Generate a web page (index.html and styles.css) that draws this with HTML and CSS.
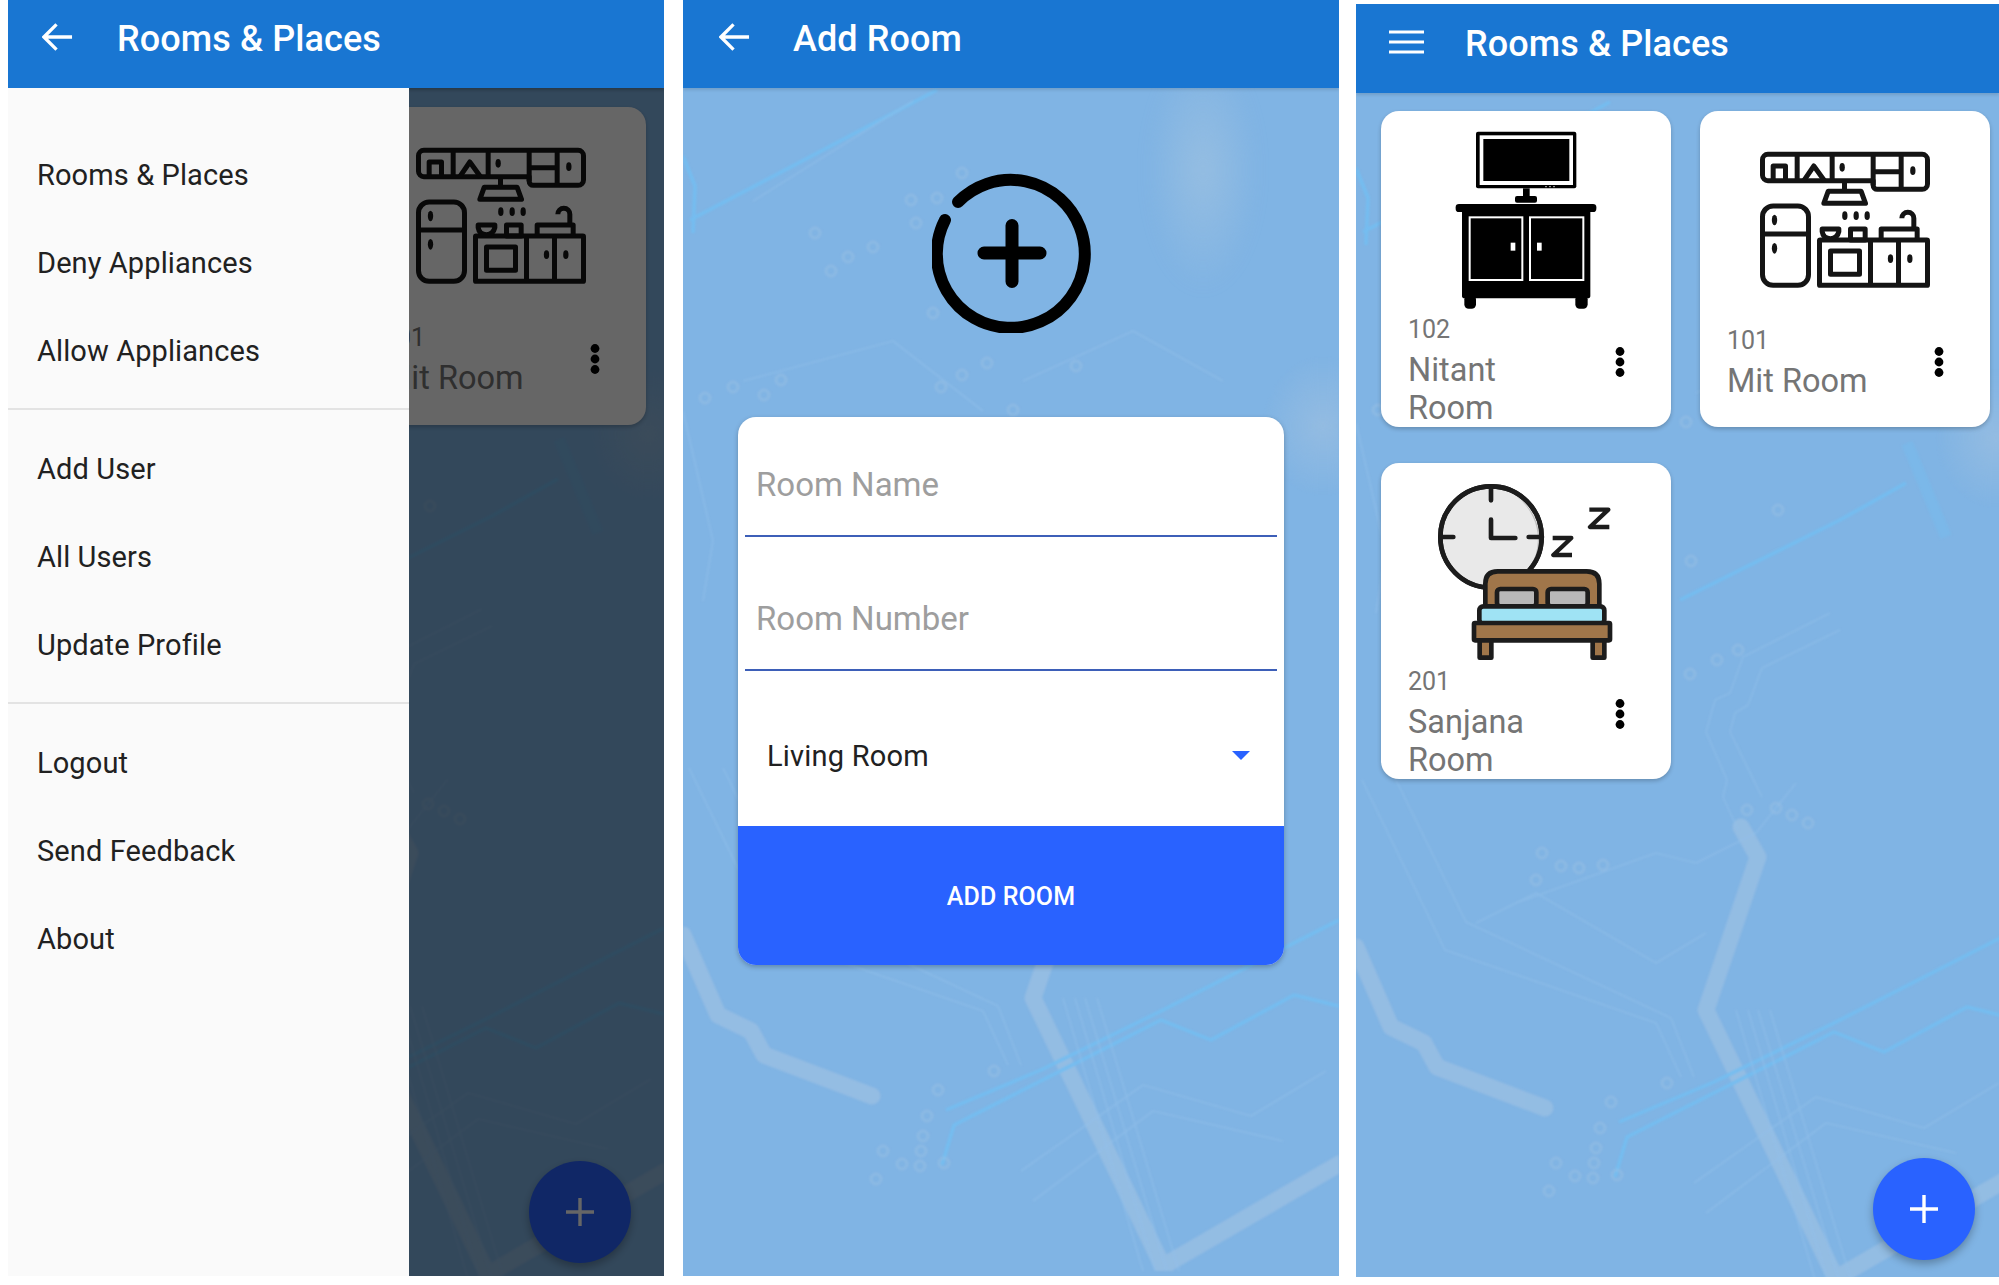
FILE: index.html
```html
<!DOCTYPE html>
<html lang="en">
<head>
<meta charset="utf-8">
<title>Rooms &amp; Places</title>
<link rel="stylesheet" href="styles.css">
</head>
<body>
<svg class="defs" aria-hidden="true">
  <defs>
    <radialGradient id="glow">
      <stop offset="0" stop-color="#a3c2e0" stop-opacity=".55"/>
      <stop offset="1" stop-color="#a3c2e0" stop-opacity="0"/>
    </radialGradient>
  </defs>
  <symbol id="circuit" viewBox="0 0 656 1190">
    <ellipse cx="640" cy="345" rx="60" ry="70" fill="url(#glow)"/>
    <g class="trace-thick">
      <path d="M385 734L402 764L350 917L482 1190"/>
      <path d="M0 854L35 934L68 950L81 974L189 1015"/>
      <path d="M656 1083L482 1184"/>
    </g>
    <g class="trace-bright">
      <path d="M656 839L478 930L358 989L263 1029"/>
      <path d="M656 925L611 914L528 959L478 939L271 1044L259 1084"/>
      <path d="M324 507L484 427L550 390"/>
      <path d="M254 9L7 139"/>
      <path d="M0 75L12 105L10 152"/>
      <path class="trace-wide" d="M551 350L590 444"/>
    </g>
    <g class="trace-thin">
      <path d="M6 687L89 857L300 930L325 984"/>
      <path d="M40 687L110 829L315 925L338 984"/>
      <path d="M474 520L387 564L374 600L359 607L350 639L371 687L367 704L382 737"/>
      <path d="M484 537L406 575L392 612L379 620L374 639L406 704"/>
      <path d="M380 917L460 1190"/>
      <path d="M392 917L472 1190"/>
      <path d="M402 917L484 1190"/>
      <path d="M414 917L496 1190"/>
      <path d="M338 1090L460 1004L568 1035L643 990"/>
      <path d="M350 1120L470 1030L600 1060"/>
      <path d="M160 810L300 760L340 770L400 740L440 690"/>
      <path d="M120 830L180 800L300 870L350 840"/>
      <path d="M0 330L30 460L20 520"/>
      <path d="M70 120L230 20"/>
      <path d="M60 300L210 260L300 330"/>
      <path d="M340 300L450 250L540 300"/>
    </g>
    <g class="via">
      <circle cx="186" cy="760" r="5"/><circle cx="205" cy="773" r="5"/><circle cx="223" cy="775" r="5"/>
      <circle cx="247" cy="772" r="5"/><circle cx="180" cy="787" r="5"/><circle cx="311" cy="990" r="5"/>
      <circle cx="255" cy="1009" r="5"/><circle cx="244" cy="1035" r="5"/><circle cx="240" cy="1055" r="5"/>
      <circle cx="238" cy="1070" r="5"/><circle cx="200" cy="1070" r="5"/><circle cx="219" cy="1083" r="5"/>
      <circle cx="237" cy="1085" r="5"/><circle cx="261" cy="1082" r="5"/><circle cx="193" cy="1098" r="5"/>
      <circle cx="228" cy="119" r="5"/><circle cx="254" cy="117" r="5"/><circle cx="233" cy="142" r="5"/>
      <circle cx="132" cy="152" r="5"/><circle cx="165" cy="176" r="5"/><circle cx="190" cy="166" r="5"/>
      <circle cx="148" cy="190" r="5"/><circle cx="250" cy="232" r="5"/><circle cx="279" cy="92" r="5"/>
      <circle cx="22" cy="317" r="5"/><circle cx="50" cy="306" r="5"/><circle cx="81" cy="314" r="5"/>
      <circle cx="98" cy="299" r="5"/><circle cx="258" cy="306" r="5"/><circle cx="279" cy="294" r="5"/>
      <circle cx="304" cy="282" r="5"/><circle cx="393" cy="285" r="5"/><circle cx="330" cy="329" r="5"/>
      <circle cx="382" cy="557" r="5"/><circle cx="361" cy="567" r="5"/><circle cx="334" cy="581" r="5"/>
      <circle cx="422" cy="417" r="5"/><circle cx="335" cy="468" r="5"/><circle cx="391" cy="717" r="5"/>
      <circle cx="420" cy="715" r="5"/><circle cx="436" cy="722" r="5"/><circle cx="452" cy="730" r="5"/>
    </g>
  </symbol>
  <symbol id="kitchen" viewBox="200 60 530 420">
    <g class="ink">
      <path d="M232 73H695a16 16 0 0 1 16 16V162a16 16 0 0 1-16 16H560a12 12 0 0 1-12-12V152H232a16 16 0 0 1-16-16V89a16 16 0 0 1 16-16z"/>
      <path d="M425 73V152M548 73V166M632 73V178M548 125H632M320 73V152"/>
      <path d="M248 152V108H285V152M340 152L370 108L402 152"/>
      <path d="M462 152V182M413 184H512L525 220H400z"/>
      <rect x="216" y="228" width="138" height="238" rx="32"/>
      <path d="M216 312H354"/>
      <rect x="387" y="330" width="324" height="136" rx="2"/>
      <path d="M540 330V466M624 330V466"/>
      <rect x="420" y="363" width="87" height="70"/>
      <path d="M395 297H445V305Q440 326 420 326Q398 326 395 305z"/>
      <rect x="480" y="297" width="44" height="33"/>
      <path d="M572 330V297H680V330M634 265a18 18 0 0 1 36 0V297"/>
    </g>
    <g class="ink-fill">
      <ellipse cx="455" cy="112" rx="8" ry="13"/><ellipse cx="667" cy="122" rx="8" ry="13"/>
      <ellipse cx="252" cy="270" rx="8" ry="16"/><ellipse cx="252" cy="355" rx="8" ry="16"/>
      <ellipse cx="463" cy="257" rx="8" ry="13"/><ellipse cx="497" cy="257" rx="8" ry="13"/><ellipse cx="530" cy="257" rx="8" ry="13"/>
      <ellipse cx="600" cy="386" rx="8" ry="13"/><ellipse cx="658" cy="386" rx="8" ry="13"/>
    </g>
  </symbol>
  <symbol id="dots" viewBox="0 0 10 30">
    <circle cx="5" cy="4.5" r="4.4"/><circle cx="5" cy="15" r="4.4"/><circle cx="5" cy="25.5" r="4.4"/>
  </symbol>
  <symbol id="arrow" viewBox="0 0 32 30">
    <path d="M31 15H2M15 2L2 15L15 28"/>
  </symbol>
  <symbol id="plus" viewBox="0 0 28 28">
    <path d="M14 0V28M0 14H28"/>
  </symbol>
</svg>

<main class="screens">
  <section class="phone phone--drawer">
    <svg class="bg"><use href="#circuit"/></svg>
    <div class="content">
      <header class="appbar appbar--under"></header>
      <div class="grid grid--peek">
        <article class="card card--peek">
          <div class="media media--kitchen"><svg class="icon-kitchen"><use href="#kitchen"/></svg></div>
          <div class="info">
            <div class="text"><div class="num">101</div><div class="name">Mit Room</div></div>
            <svg class="kebab kebab--short"><use href="#dots"/></svg>
          </div>
        </article>
      </div>
    </div>
    <button class="fab"><svg class="fab-plus"><use href="#plus"/></svg></button>
    <div class="scrim"></div>
    <header class="appbar appbar--top">
      <svg class="nav-arrow"><use href="#arrow"/></svg>
      <h1 class="title">Rooms &amp; Places</h1>
    </header>
    <nav class="drawer">
      <ul class="menu-group menu-group--first">
        <li class="menu-item">Rooms &amp; Places</li>
        <li class="menu-item">Deny Appliances</li>
        <li class="menu-item">Allow Appliances</li>
      </ul>
      <ul class="menu-group">
        <li class="menu-item">Add User</li>
        <li class="menu-item">All Users</li>
        <li class="menu-item">Update Profile</li>
      </ul>
      <ul class="menu-group menu-group--last">
        <li class="menu-item">Logout</li>
        <li class="menu-item">Send Feedback</li>
        <li class="menu-item">About</li>
      </ul>
    </nav>
  </section>

  <section class="phone phone--form">
    <svg class="bg bg--form"><use href="#circuit"/></svg>
    <div class="streak"></div>
    <div class="content">
      <header class="appbar">
        <svg class="nav-arrow"><use href="#arrow"/></svg>
        <h1 class="title">Add Room</h1>
      </header>
      <div class="form-area">
        <svg class="add-icon" viewBox="0 0 160 160">
          <path d="M26 29A74 74 0 1 1 13 47"/>
          <path class="add-icon-plus" d="M80 52.5V108.5M52 80H108"/>
        </svg>
        <form class="form-card">
          <div class="field field--name"><span class="placeholder">Room Name</span></div>
          <div class="field field--number"><span class="placeholder">Room Number</span></div>
          <div class="select"><span>Living Room</span><i class="caret"></i></div>
          <div class="submit">ADD ROOM</div>
        </form>
      </div>
    </div>
  </section>

  <section class="phone phone--list">
    <svg class="bg"><use href="#circuit"/></svg>
    <div class="content">
      <header class="appbar appbar--list">
        <svg class="burger" viewBox="0 0 35 24"><path d="M0 2H35M0 12H35M0 22H35"/></svg>
        <h1 class="title">Rooms &amp; Places</h1>
      </header>
      <div class="grid">
        <article class="card card--tall">
          <div class="media media--tv">
            <svg class="icon-tv" viewBox="-13 0 540 600">
              <rect x="107" y="35" width="301" height="170" rx="6" fill="#000"/>
              <rect x="118" y="46" width="280" height="149" fill="#fff"/>
              <rect x="129" y="57" width="258" height="126" fill="#000"/>
              <path d="M314 200h6M326 200h6M338 200h6" stroke="#aaa" stroke-width="3"/>
              <rect x="248" y="205" width="20" height="28" fill="#000"/>
              <rect x="224" y="228" width="66" height="20" rx="6" fill="#000"/>
              <rect x="46" y="252" width="422" height="24" rx="10" fill="#000"/>
              <rect x="65" y="268" width="385" height="267" rx="8" fill="#000"/>
              <rect x="72" y="525" width="35" height="41" rx="13" fill="#000"/>
              <rect x="405" y="525" width="37" height="41" rx="13" fill="#000"/>
              <rect x="88" y="292" width="158" height="188" fill="#000" stroke="#fff" stroke-width="6"/>
              <rect x="269" y="292" width="160" height="188" fill="#000" stroke="#fff" stroke-width="6"/>
              <rect x="211" y="368" width="14" height="24" fill="#fff"/>
              <rect x="290" y="368" width="14" height="24" fill="#fff"/>
            </svg>
          </div>
          <div class="info">
            <div class="text"><div class="num">102</div><div class="name">Nitant Room</div></div>
            <svg class="kebab"><use href="#dots"/></svg>
          </div>
        </article>
        <article class="card">
          <div class="media media--kitchen"><svg class="icon-kitchen"><use href="#kitchen"/></svg></div>
          <div class="info">
            <div class="text"><div class="num">101</div><div class="name">Mit Room</div></div>
            <svg class="kebab kebab--short"><use href="#dots"/></svg>
          </div>
        </article>
        <article class="card card--tall">
          <div class="media media--bed">
            <svg class="icon-bed" viewBox="200 100 540 540">
              <g stroke="#1c1c1c" stroke-width="14" stroke-linejoin="round" stroke-linecap="round" fill="none">
                <circle cx="365" cy="262" r="152" fill="#e9e9e9"/>
                <path d="M440 140A152 152 0 0 1 470 370A160 160 0 0 0 440 140z" fill="#bdbdbd" stroke="none"/>
                <circle cx="365" cy="262" r="152"/>
                <path d="M365 115V152M215 262H252M478 262H518"/>
                <path d="M365 210V265H438"/>
                <path d="M550 265H606L552 316H608M660 180H717L662 232H720" stroke-width="13" stroke-linecap="butt"/>
                <path d="M348 470V402Q348 365 385 365H652Q690 365 690 402V470z" fill="#a0764a"/>
                <rect x="383" y="418" width="118" height="52" rx="10" fill="#b8b8b8"/>
                <rect x="535" y="418" width="120" height="52" rx="10" fill="#b8b8b8"/>
                <rect x="330" y="470" width="375" height="52" rx="12" fill="#9fe3f4"/>
                <rect x="314" y="520" width="408" height="52" rx="3" fill="#a0764a"/>
                <rect x="331" y="572" width="35" height="52" fill="#a0764a"/>
                <rect x="670" y="572" width="35" height="52" fill="#a0764a"/>
              </g>
            </svg>
          </div>
          <div class="info">
            <div class="text"><div class="num">201</div><div class="name">Sanjana Room</div></div>
            <svg class="kebab"><use href="#dots"/></svg>
          </div>
        </article>
      </div>
    </div>
    <button class="fab fab--list"><svg class="fab-plus"><use href="#plus"/></svg></button>
  </section>
</main>
</body>
</html>
```

FILE: styles.css
```css
* { box-sizing: border-box; }
html, body { margin: 0; padding: 0; background: #fff; overflow: hidden; }
body { font-family: Roboto, "Liberation Sans", sans-serif; width: 1999px; height: 1285px; }
.defs { position: absolute; width: 0; height: 0; }

.screens { display: flex; align-items: flex-start; padding-left: 8px; }
.phone { position: relative; overflow: hidden; background: #80b4e4; flex: none; }
.phone--drawer { width: 656px; height: 1276px; }
.phone--form { width: 656px; height: 1276px; margin-left: 19px; }
.phone--list { width: 643px; height: 1273px; margin-left: 17px; margin-top: 4px; }

.bg { position: absolute; left: 0; top: 89px; width: 656px; height: 1190px; filter: blur(1.1px); }
.bg--form { top: 81px; }
.trace-thick { fill: none; stroke: #9cc0e3; stroke-width: 17; stroke-linecap: round; stroke-linejoin: round; opacity: .7; }
.trace-bright { fill: none; stroke: #74bdf0; stroke-width: 3.5; stroke-linejoin: round; }
.trace-wide { stroke-width: 12; opacity: .4; }
.trace-thin { fill: none; stroke: #92c0ea; stroke-width: 1.6; stroke-linejoin: round; opacity: .6; }
.via { fill: none; stroke: #97bfe4; stroke-width: 3; opacity: .55; }
.streak { position: absolute; left: 465px; top: 50px; width: 110px; height: 240px; background: radial-gradient(closest-side, rgba(163,196,224,.6), rgba(163,196,224,0)); filter: blur(8px); }

.content { position: relative; }
.appbar { display: flex; align-items: flex-start; height: 88px; padding: 20px 0 0 36px; background: #1976d2; color: #fff; box-shadow: 0 2px 3px rgba(0,0,0,.12); }
.appbar--list { height: 89px; padding: 21px 0 0 33px; }
.title { margin: 0 0 0 43px; font-size: 36px; line-height: 38px; font-weight: 500; letter-spacing: .1px; white-space: nowrap; }
.nav-arrow { width: 31px; height: 30px; flex: none; margin-top: 2px; fill: none; stroke: #fff; stroke-width: 3.4; stroke-linejoin: miter; }
.burger { width: 35px; height: 24px; margin-top: 5px; flex: none; fill: none; stroke: #fff; stroke-width: 3.2; }
.appbar--list .title { margin-left: 41px; }

.scrim { position: absolute; inset: 0; background: rgba(0,0,0,.6); }
.appbar--top { position: absolute; left: 0; right: 0; top: 0; padding-left: 34px; }
.drawer { position: absolute; left: 0; top: 88px; bottom: 0; width: 401px; background: #fafafa; padding-top: 43px; }
.appbar--top .title { margin-left: 44px; }
.menu-group { list-style: none; margin: 0; padding: 0 0 13px; border-bottom: 2px solid #e3e3e3; margin-bottom: 15px; }
.menu-group--last { border-bottom: 0; }
.menu-item { height: 88px; line-height: 88px; padding-left: 29px; font-size: 29px; letter-spacing: .1px; color: #212121; }

.grid { display: grid; grid-template-columns: 290px 290px; column-gap: 29px; row-gap: 36px; padding: 18px 0 0 25px; }
.grid--peek { display: block; padding: 19px 0 0 348px; }
.card { display: flex; flex-direction: column; width: 290px; height: 316px; background: #fff; border-radius: 18px; overflow: hidden; box-shadow: 0 2px 4px rgba(0,0,0,.22); }
.card--peek { height: 318px; }
.media { flex: none; height: 212px; display: flex; justify-content: center; align-items: flex-start; }
.card--tall .media { height: 201px; }
.card--peek .media { height: 213px; }
.media--kitchen { padding-top: 39px; }
.media--tv { padding-top: 9px; }
.media--bed { padding-top: 20px; }
.icon-kitchen { width: 177px; height: 140px; }
.icon-tv { width: 180px; height: 200px; }
.icon-bed { width: 180px; height: 180px; }
.ink { fill: none; stroke: #141414; stroke-width: 15; stroke-linejoin: round; }
.ink-fill { fill: #141414; }
.info { display: flex; justify-content: space-between; padding: 0 46px 0 27px; }
.text { width: 170px; }
.num { font-size: 25px; line-height: 36px; color: #757575; }
.name { margin-top: 3px; font-size: 32.5px; line-height: 38px; color: #757575; }
.kebab { flex: none; width: 10px; height: 30px; margin-top: 35px; fill: #000; }
.kebab--short { margin-top: 24px; }

.form-area { display: flex; flex-direction: column; align-items: center; }
.add-icon { width: 160px; height: 160px; margin: 85px 0 84px 2px; fill: none; stroke: #000; stroke-width: 12; stroke-linecap: round; }
.add-icon-plus { stroke-width: 13; }
.form-card { width: 546px; background: #fff; border-radius: 18px; overflow: hidden; box-shadow: 0 2px 5px rgba(0,0,0,.25); padding: 0; }
.field { margin: 0 7px; border-bottom: 2px solid #3d5fb8; display: flex; align-items: flex-end; padding: 0 0 31px 11px; }
.field--name { height: 120px; }
.field--number { height: 134px; }
.placeholder { font-size: 33px; line-height: 38px; color: #9e9e9e; }
.select { height: 155px; display: flex; align-items: center; justify-content: space-between; padding: 14px 34px 0 29px; font-size: 29px; color: #212121; letter-spacing: .2px; }
.caret { width: 0; height: 0; border-left: 9px solid transparent; border-right: 9px solid transparent; border-top: 9px solid #2962ff; }
.submit { height: 139px; padding-top: 2px; display: flex; align-items: center; justify-content: center; background: #2962ff; color: #fff; font-size: 25px; font-weight: 500; letter-spacing: .1px; }

.fab { position: absolute; right: 33px; bottom: 13px; width: 102px; height: 102px; padding: 0; border: 0; border-radius: 50%; background: #2962ff; display: flex; align-items: center; justify-content: center; box-shadow: 0 4px 8px rgba(0,0,0,.28); }
.fab--list { right: 24px; bottom: 17px; }
.fab-plus { width: 28px; height: 28px; fill: none; stroke: #fff; stroke-width: 3.4; }
```
